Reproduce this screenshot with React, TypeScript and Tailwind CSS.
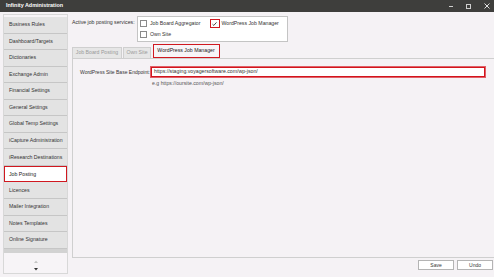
const NAV_ITEMS = [
  "Business Rules",
  "Dashboard/Targets",
  "Dictionaries",
  "Exchange Admin",
  "Financial Settings",
  "General Settings",
  "Global Temp Settings",
  "iCapture Administration",
  "iResearch Destinations",
  "Job Posting",
  "Licences",
  "Mailer Integration",
  "Notes Templates",
  "Online Signature",
];

export default function App() {
  return (
    <div
      className="flex h-[277px] w-[494px] flex-col overflow-hidden whitespace-nowrap bg-[#f5f2f5] text-[5.2px] leading-none text-[#333]"
      style={{ fontFamily: '"Liberation Sans", Arial, sans-serif' }}
    >
      <TitleBar />
      <div className="flex flex-1 min-h-0">
        <Sidebar />
        <main className="flex flex-1 flex-col pl-[3px]">
          <ServicesRow />
          <Tabs />
          <div className="ml-[1px] flex h-[200px] flex-col border-l border-t border-b border-[#cfcfcf] pl-[7px] pt-[8px]">
            <div className="flex items-center">
              <span className="w-[71px] text-[5px]">WordPress Site Base Endpoint:</span>
              <div className="flex h-[10px] w-[334px] items-center border border-[#d3141c] bg-white pl-[2px] outline outline-[0.5px] outline-[#e06068]">
                https://staging.voyagersoftware.com/wp-json/
              </div>
            </div>
            <div className="ml-[72px] mt-[4px] text-[#555]">e.g https://oursite.com/wp-json/</div>
          </div>
          <div className="flex justify-end gap-[3px] pr-[1px] pt-[2px]">
            <Button label="Save" />
            <Button label="Undo" />
          </div>
        </main>
      </div>
    </div>
  );
}

function TitleBar() {
  return (
    <div className="flex h-[12px] shrink-0 items-center justify-between bg-[#3e3e3c] pl-[6px] pr-[4px] text-white">
      <span className="font-bold text-[5.4px]">Infinity Administration</span>
      <div className="flex items-center gap-[13px] text-[#d8d8d8]">
        <span className="block h-[1px] w-[4px] bg-[#cfcfcf]" />
        <span className="block h-[5px] w-[5px] border border-[#cfcfcf]" />
        <svg width="6" height="6" viewBox="0 0 6 6">
          <path d="M0.5 0.5 L5.5 5.5 M5.5 0.5 L0.5 5.5" stroke="#e0e0e0" strokeWidth="1" />
        </svg>
      </div>
    </div>
  );
}

function Sidebar() {
  return (
    <aside className="ml-[3px] mt-[2px] mb-[3px] flex w-[65px] shrink-0 flex-col border border-[#d8d8d8] bg-[#f7f4f7]">
      <div className="flex flex-col pt-[2px]">
        {NAV_ITEMS.map((item) =>
          item === "Job Posting" ? (
            <div
              key={item}
              className="flex h-[16.55px] items-center border-[1.5px] border-[#d01820] bg-white pl-[4px] text-[#222]"
            >
              {item}
            </div>
          ) : (
            <div
              key={item}
              className="flex h-[16.55px] items-center border-b-[1.5px] border-[#c6c6c6] bg-[#e3e3e3] pl-[5px]"
            >
              {item}
            </div>
          )
        )}
        <div className="h-[4px] bg-[#d2d2d2]" />
      </div>
      <div className="flex flex-1 flex-col items-center justify-end gap-[5px] pb-[2px]">
        <svg width="4" height="3" viewBox="0 0 4 3">
          <path d="M0 3 L2 0.5 L4 3 Z" fill="#c4c4c4" />
        </svg>
        <svg width="4" height="3" viewBox="0 0 4 3">
          <path d="M0 0 L4 0 L2 2.5 Z" fill="#333" />
        </svg>
      </div>
    </aside>
  );
}

function ServicesRow() {
  return (
    <div className="flex items-start pt-[4px]">
      <span className="mt-[4px] w-[66px] pl-[1px]">Active job posting services:</span>
      <div className="flex h-[26px] w-[151px] flex-col gap-[3px] border border-[#c4c4c4] bg-white pl-[2px] pt-[2px]">
        <div className="flex items-center">
          <Checkbox />
          <span className="ml-[3px] w-[60px]">Job Board Aggregator</span>
          <span className="ml-[-0.5px] flex h-[9px] w-[10px] items-center justify-center border-[1.5px] border-[#d01820] bg-white">
            <svg width="5" height="4" viewBox="0 0 5 4">
              <path d="M0.5 2.2 L1.8 3.4 L4.5 0.4" fill="none" stroke="#333" strokeWidth="0.9" />
            </svg>
          </span>
          <span className="ml-[2px]">WordPress Job Manager</span>
        </div>
        <div className="flex items-center">
          <Checkbox />
          <span className="ml-[3px]">Own Site</span>
        </div>
      </div>
    </div>
  );
}

function Checkbox() {
  return <span className="block h-[7px] w-[7px] border border-[#8a8a8a] bg-white" />;
}

function Tabs() {
  return (
    <div className="mt-[3px] flex h-[13px] items-end pl-[1px]">
      <div className="mr-[1px] flex h-[11px] w-[50px] items-center justify-center border border-b-0 border-[#cfcfcf] bg-[#e6e6e6] text-[#9a9a9a]">
        Job Board Posting
      </div>
      <div className="mr-[1.5px] flex h-[11px] w-[28px] items-center justify-center border border-b-0 border-[#cfcfcf] bg-[#e6e6e6] text-[#9a9a9a]">
        Own Site
      </div>
      <div className="flex h-[14px] w-[67px] items-center justify-center border-[1.5px] border-[#d01820] bg-[#f7f4f7] text-[#222]">
        WordPress Job Manager
      </div>
    </div>
  );
}

function Button({ label }: { label: string }) {
  return (
    <button className="flex h-[10px] w-[36px] items-center justify-center border border-[#b4b4b4] bg-white text-[5px] text-[#333]">
      {label}
    </button>
  );
}
